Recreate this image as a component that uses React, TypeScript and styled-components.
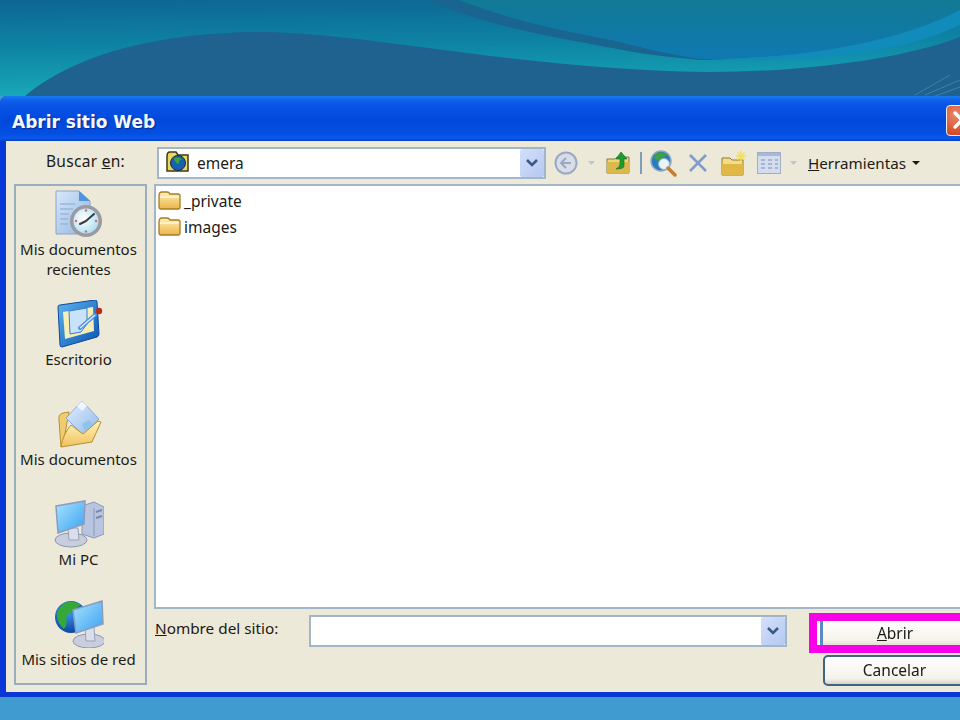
import React from "react";
import styled, { createGlobalStyle } from "styled-components";

const Global = createGlobalStyle`
  html, body { margin: 0; padding: 0; background: #3f9bd0; }
  * { box-sizing: border-box; }
`;

const Page = styled.div`
  width: 960px;
  height: 720px;
  overflow: hidden;
  background: #3f9bd0;
  display: flex;
  flex-direction: column;
`;
const WaveArt = styled.svg`
  display: block;
  width: 960px;
  height: 96px;
  flex: none;
`;
const Dialog = styled.div`
  width: 990px;
  height: 601px;
  flex: none;
  display: flex;
  flex-direction: column;
  background: #0a3fd0;
  border-top-left-radius: 7px;
  border-left: 6px solid #0837d8;
  border-bottom: 5px solid #0a36d6;
  font-family: "Noto Sans", "Open Sans", sans-serif;
  font-size: 15.5px;
  color: #1c1a16;
  filter: blur(0.35px);
`;
const TitleBar = styled.div`
  height: 45px;
  flex: none;
  margin-left: -6px;
  padding: 7px 0 0 12px;
  display: flex;
  align-items: center;
  border-top-left-radius: 7px;
  background: linear-gradient(180deg, #1a7cf2 0%, #0f63ea 8%, #0a55e6 20%, #0048dc 55%, #0450e2 85%, #0a58ea 94%, #0440c8 100%);
  color: #f4f8ff;
  font-family: "DejaVu Sans", sans-serif;
  font-weight: 700;
  font-size: 17px;
  text-shadow: 1px 1px 1px #0a2a90;
  position: relative;
`;
const CloseButton = styled.div`
  position: absolute;
  left: 946px;
  top: 9px;
  width: 32px;
  height: 31px;
  border: 1.5px solid #f0f0f0;
  border-radius: 4px;
  background: radial-gradient(circle at 30% 30%, #e88a6a, #d8502c 60%, #b83a1c);
  svg { display: block; }
`;
const Body = styled.div`
  flex: 1;
  background: #ece9d8;
  display: flex;
  flex-direction: column;
  min-height: 0;
`;
const TopRow = styled.div`
  height: 43px;
  flex: none;
  padding: 6px 0 0 8px;
  display: flex;
  align-items: flex-start;
`;
const LookLabel = styled.div`
  width: 133px;
  height: 32px;
  line-height: 29px;
  text-align: center;
  padding-left: 10px;
  letter-spacing: 0.3px;
`;
const Combo = styled.div<{ $w: number }>`
  margin-left: 10px;
  height: 32px;
  background: #fff;
  border: 2px solid #a3b6c8;
  display: flex;
  align-items: center;
  width: ${(p) => p.$w}px;
  flex: none;
`;
const ComboIcon = styled.svg`
  width: 25px;
  height: 24px;
  margin: -3px 6px 0 7px;
  flex: none;
`;
const ComboText = styled.div`
  flex: 1;
  margin-top: -1px;
`;
const ArrowButton = styled.div`
  width: 24px;
  height: 28px;
  background: linear-gradient(135deg, #d4e0fa, #b4c8f2);
  border-radius: 2px;
  display: flex;
  align-items: center;
  justify-content: center;
`;
const Toolbar = styled.div`
  height: 32px;
  display: flex;
  align-items: center;
  margin-left: 8px;
`;
const ToolIcon = styled.svg<{ $ml?: number }>`
  flex: none;
  margin-left: ${(p) => p.$ml ?? 0}px;
`;
const ToolSep = styled.div`
  width: 2px;
  height: 22px;
  background: #7f9db9;
  margin-left: 9px;
`;
const ToolMenu = styled.div`
  margin-left: 11px;
  display: flex;
  align-items: center;
  gap: 6px;
  white-space: nowrap;
  font-size: 15.2px;
  margin-top: -1px;
`;
const Caret = styled.span`
  width: 0;
  height: 0;
  border-left: 4.5px solid transparent;
  border-right: 4.5px solid transparent;
  border-top: 4px solid #1c1a16;
`;
const MainRow = styled.div`
  flex: 1;
  display: flex;
  padding: 0 0 7px 8px;
  min-height: 0;
`;
const Places = styled.div`
  width: 133px;
  flex: none;
  border: 2px solid #98aebf;
  padding: 4px 4px 0 0;
  display: flex;
  flex-direction: column;
  align-items: center;
  font-size: 15px;
`;
const Place = styled.div<{ $h: number }>`
  height: ${(p) => p.$h}px;
  flex: none;
  width: 100%;
  display: flex;
  flex-direction: column;
  align-items: center;
  text-align: center;
  line-height: 20px;
  white-space: nowrap;
  svg { flex: none; margin-bottom: 1px; }
`;
const Right = styled.div`
  flex: 1;
  margin-left: 7px;
  display: flex;
  flex-direction: column;
  min-width: 0;
`;
const FileList = styled.div`
  height: 425px;
  flex: none;
  background: #fff;
  border: 2px solid #a3b6c8;
  border-right: none;
  padding: 2px 0 0 1px;
  display: flex;
  flex-direction: column;
`;
const FileRow = styled.div`
  height: 26px;
  display: flex;
  align-items: center;
  gap: 1px;
`;
const Footer = styled.div`
  flex: 1;
  display: grid;
  grid-template-columns: 155px 478px 1fr;
  grid-template-rows: 44px 1fr;
  padding-top: 4px;
`;
const NameLabel = styled.div`
  padding: 3px 0 0 1px;
  line-height: 24px;
  font-size: 15.3px;
`;
const NameCombo = styled(Combo)`
  margin: 2px 0 0;
  justify-content: flex-end;
`;
const DefaultFrame = styled.div`
  margin-left: 22px;
  height: 40px;
  width: 190px;
  border: 8px solid #f800e8;
  background: #ece9d8;
`;
const DefaultButton = styled.div`
  height: 24px;
  text-align: center;
  line-height: 24px;
  padding-right: 21px;
  background: linear-gradient(180deg, #fff, #f4f2ea 80%, #e4e0d0);
  border-left: 3px solid #fff;
  box-shadow: inset 3px 0 0 #5f88c0;
`;
const CancelButton = styled.div`
  grid-column: 3;
  margin: -2px 0 0 36px;
  height: 31px;
  width: 190px;
  border: 2px solid #3f6488;
  border-radius: 5px;
  text-align: center;
  line-height: 27px;
  padding-right: 47px;
  background: linear-gradient(180deg, #fff, #f4f2ea 80%, #d8d4c4);
`;

const SmallFolder = () => (
  <svg width="26" height="22" viewBox="0 0 26 22">
    <defs>
      <linearGradient id="sf" x1="0" y1="0" x2="0" y2="1">
        <stop offset="0" stopColor="#fff0b8" />
        <stop offset="1" stopColor="#ecb448" />
      </linearGradient>
    </defs>
    <path d="M2 6 Q2 2 5 2 H10 Q12 2 13 4 H21 Q23 4 23 6 V17 Q23 19 21 19 H4 Q2 19 2 17 Z" fill="url(#sf)" stroke="#a87c20" strokeWidth="1.3" />
    <path d="M3 7 H22" stroke="#fff6d0" strokeWidth="1.5" />
  </svg>
);

const RecentIcon = () => (
  <svg width="48" height="48" viewBox="0 0 48 48">
    <defs>
      <linearGradient id="rd" x1="0" y1="0" x2="1" y2="1">
        <stop offset="0" stopColor="#d8e8fa" />
        <stop offset="1" stopColor="#8fb4e2" />
      </linearGradient>
      <radialGradient id="rc" cx="0.4" cy="0.4" r="0.7">
        <stop offset="0" stopColor="#ffffff" />
        <stop offset="1" stopColor="#a8dcf0" />
      </radialGradient>
    </defs>
    <path d="M1 1 H24 L35 11 V44 H1 Z" fill="url(#rd)" stroke="#8aa6c8" />
    <path d="M24 1 V11 H35 Z" fill="#4f94dc" />
    <path d="M5 14 H20 M5 19 H18 M5 24 H14 M5 29 H13 M5 34 H13" stroke="#9ab6d8" strokeWidth="1.5" />
    <circle cx="31" cy="31" r="16" fill="#9a9aa2" />
    <circle cx="31" cy="31" r="12.5" fill="url(#rc)" />
    <path d="M31 31 L39 24 M31 31 L25 34" stroke="#3a3a40" strokeWidth="2" strokeLinecap="round" />
    <circle cx="31" cy="20.5" r="1.2" fill="#d87060" /><circle cx="41" cy="31" r="1.2" fill="#d87060" />
    <circle cx="31" cy="41.5" r="1.2" fill="#d87060" /><circle cx="21" cy="31" r="1.2" fill="#d87060" />
  </svg>
);

const DesktopIcon = () => (
  <svg width="48" height="48" viewBox="0 0 48 48">
    <defs>
      <linearGradient id="db" x1="0" y1="0" x2="1" y2="1">
        <stop offset="0" stopColor="#5cb4ee" />
        <stop offset="1" stopColor="#0a52b4" />
      </linearGradient>
    </defs>
    <path d="M3 7 Q3 5 5 5 L40 0 Q42 0 42 2 L44 34 Q44 36 42 37 L7 47 Q5 47 5 45 Z" fill="url(#db)" stroke="#0c4a9c" />
    <path d="M8 12 L38 7 L39 31 L10 39 Z" fill="#f6eeb8" />
    <path d="M14 11 L32 8 V24 L26 32 L15 34 Z" fill="#c8e2fa" stroke="#3a7cc8" />
    <path d="M25 28 L40 15" stroke="#4a90e0" strokeWidth="4" strokeLinecap="round" />
    <path d="M25 28 L40 15" stroke="#d8ecff" strokeWidth="1.5" />
    <circle cx="44" cy="11" r="3.2" fill="#b82c18" />
  </svg>
);

const DocsIcon = () => (
  <svg width="48" height="48" viewBox="0 0 48 48">
    <defs>
      <linearGradient id="df" x1="0" y1="0" x2="0" y2="1">
        <stop offset="0" stopColor="#fff4bc" />
        <stop offset="1" stopColor="#f0c25c" />
      </linearGradient>
      <linearGradient id="dp" x1="0" y1="0" x2="1" y2="1">
        <stop offset="0" stopColor="#e4f0ff" />
        <stop offset="1" stopColor="#90b8ec" />
      </linearGradient>
    </defs>
    <path d="M4 20 Q3 14 8 13 L14 12 L8 44 L6 47 Z" fill="#f0cc70" stroke="#b89030" />
    <path d="M11 18 L27 1 L44 19 L28 35 Z" fill="url(#dp)" stroke="#8cacd4" />
    <path d="M22 6 L27 1 L32 6 L27 11 Z" fill="#f0f6ff" />
    <path d="M16 25 L28 34 L43 21 L46 22 L37 42 L6 47 Q8 34 16 25 Z" fill="url(#df)" stroke="#b89030" />
    <path d="M27 24 L34 20 L38 24 L30 31 Z" fill="#8ec4ec" />
  </svg>
);

const PcIcon = () => (
  <svg width="50" height="48" viewBox="0 0 50 48">
    <defs>
      <linearGradient id="ps" x1="0" y1="0" x2="1" y2="1">
        <stop offset="0" stopColor="#a8e4ff" />
        <stop offset="1" stopColor="#3aa0f0" />
      </linearGradient>
    </defs>
    <path d="M28 6 L40 2 L50 7 V34 L40 38 L28 34 Z" fill="#b8c4e0" stroke="#8a98b8" />
    <path d="M40 8 V36" stroke="#8a98b8" />
    <path d="M42 12 L48 10 M42 18 L48 16" stroke="#7a88a8" strokeWidth="2" />
    <ellipse cx="17" cy="40" rx="16" ry="7" fill="#c8cede" stroke="#8c96ae" />
    <path d="M14 28 H24 L25 40 H15 Z" fill="#d8deea" stroke="#98a2b8" />
    <path d="M2 6 L31 1 L30 24 L4 33 Z" fill="url(#ps)" stroke="#8c9cc0" strokeWidth="1.5" />
  </svg>
);

const NetIcon = () => (
  <svg width="50" height="48" viewBox="0 0 50 48">
    <defs>
      <linearGradient id="ns" x1="0" y1="0" x2="1" y2="1">
        <stop offset="0" stopColor="#a8e4ff" />
        <stop offset="1" stopColor="#3aa0f0" />
      </linearGradient>
      <radialGradient id="ng" cx="0.4" cy="0.35" r="0.7">
        <stop offset="0" stopColor="#3a9ae8" />
        <stop offset="1" stopColor="#0a3ea0" />
      </radialGradient>
    </defs>
    <circle cx="17" cy="17" r="16" fill="url(#ng)" />
    <path d="M9 4 Q18 -1 27 5 Q20 8 22 13 Q14 10 12 18 Q14 24 10 29 Q2 22 3 12 Q6 7 9 4 Z" fill="#36a838" />
    <ellipse cx="35" cy="41" rx="16" ry="7" fill="#c8cede" stroke="#8c96ae" />
    <path d="M31 27 H40 L41 41 H32 Z" fill="#d8deea" stroke="#98a2b8" />
    <path d="M19 10 L48 1 L49 24 L22 33 Z" fill="url(#ns)" stroke="#8c9cc0" strokeWidth="1.5" />
  </svg>
);

const Chevron = () => (
  <svg width="14" height="10" viewBox="0 0 14 10">
    <path d="M2 2 L7 7 L12 2" fill="none" stroke="#3a5a84" strokeWidth="2.6" />
  </svg>
);

export default function App() {
  return (
    <Page>
      <Global />
      <WaveArt viewBox="0 0 960 96" preserveAspectRatio="none">
        <defs>
          <linearGradient id="w1" x1="0" y1="0" x2="0.1" y2="1">
            <stop offset="0" stopColor="#0d6694" />
            <stop offset="0.5" stopColor="#0e84a4" />
            <stop offset="1" stopColor="#18a8b8" />
          </linearGradient>
          <linearGradient id="w2" x1="0" y1="0" x2="0" y2="1">
            <stop offset="0" stopColor="#127a94" />
            <stop offset="1" stopColor="#0f78b2" />
          </linearGradient>
        </defs>
        <rect width="960" height="96" fill="url(#w1)" />
        <path d="M429 0 C 480 25 560 38 612 48 C 640 54 670 57 700 60 L 760 60 L 700 57 C 670 54 640 47 612 40 C 560 30 510 20 459 0 Z" fill="#1a6490" />
        <path d="M459 0 H960 V12 C900 42 800 60 700 59 C670 55 640 47 612 40 C560 30 510 20 459 0 Z" fill="url(#w2)" />
        <path d="M700 59 C800 60 900 42 960 10 V25 C900 55 800 62 730 60 Z" fill="#118cba" />
        <path d="M25 96 C80 50 170 32 263 32 C380 34 520 70 710 72 C800 72 900 60 960 37 V96 Z" fill="#1f628f" />
        <path d="M915 95 L950 75 M925 95 L960 80 M935 96 L960 87" stroke="#3f80a8" strokeWidth="1" />
      </WaveArt>
      <Dialog>
        <TitleBar>
          Abrir sitio Web
          <CloseButton>
            <svg width="29" height="28" viewBox="0 0 29 28">
              <path d="M8 7 L22 21 M22 7 L8 21" stroke="#fff" strokeWidth="3.4" strokeLinecap="round" />
            </svg>
          </CloseButton>
        </TitleBar>
        <Body>
          <TopRow>
            <LookLabel>Buscar <u>e</u>n:</LookLabel>
            <Combo $w={389}>
              <ComboIcon viewBox="0 0 25 24">
                <path d="M1 6 Q1 2 4 2 H10 L12 5 H22 V21 H1 Z" fill="#e8d860" stroke="#3a3a1c" strokeWidth="1.5" />
                <circle cx="12" cy="13" r="7.5" fill="#1660b0" stroke="#1a2a4a" />
                <path d="M8 8 Q13 6 16 9 Q12 11 13 14 Q9 14 8 8 Z" fill="#3aa040" />
              </ComboIcon>
              <ComboText>emera</ComboText>
              <ArrowButton><Chevron /></ArrowButton>
            </Combo>
            <Toolbar>
              <ToolIcon width="24" height="24" viewBox="0 0 24 24" $ml={0}>
                <circle cx="12" cy="12" r="10.5" fill="#d8dee8" stroke="#9aa8c4" strokeWidth="2" />
                <path d="M12 7 L7 12 L12 17 M7 12 H17" fill="none" stroke="#9aa8c4" strokeWidth="2" />
              </ToolIcon>
              <ToolIcon width="7" height="5" viewBox="0 0 7 5" $ml={10}><path d="M0 0 H7 L3.5 4 Z" fill="#c0c4cc" /></ToolIcon>
              <ToolIcon width="25" height="24" viewBox="0 0 25 24" $ml={11}>
                <path d="M1 8 H9 L11 6 H23 V22 H1 Z" fill="#f0d478" stroke="#8a7a3c" />
                <path d="M1 11 H24 V22 H1 Z" fill="#dcb84c" />
                <path d="M15 1 L21 8 H18 V15 Q18 18 10 18 Q14 16 14 13 V8 H10 Z" fill="#1e9a34" stroke="#0c6c1c" strokeWidth="0.6" />
              </ToolIcon>
              <ToolSep />
              <ToolIcon width="27" height="27" viewBox="0 0 27 27" $ml={8}>
                <circle cx="11" cy="11" r="10" fill="#2a7cc0" stroke="#90a8c0" strokeWidth="1.5" />
                <path d="M5 4 Q12 0 18 5 Q12 7 11 11 Q6 11 4 8 Z" fill="#3aa04a" />
                <circle cx="14" cy="14" r="5.5" fill="#e8f4fc" stroke="#9ab0c4" />
                <path d="M18 18 L25 25" stroke="#c08038" strokeWidth="3.5" strokeLinecap="round" />
              </ToolIcon>
              <ToolIcon width="20" height="20" viewBox="0 0 20 20" $ml={11}>
                <path d="M2 2 L18 18 M18 2 L2 18" stroke="#7f9ccc" strokeWidth="2.6" />
              </ToolIcon>
              <ToolIcon width="26" height="26" viewBox="0 0 26 26" $ml={13}>
                <path d="M1 8 H9 L11 10 H22 V25 H1 Z" fill="#f4dc88" stroke="#8a7a3c" />
                <path d="M1 14 H22 V25 H1 Z" fill="#e0b848" />
                <path d="M20 1 V11 M15 6 H25 M16.5 2.5 L23.5 9.5 M23.5 2.5 L16.5 9.5" stroke="#f4e050" strokeWidth="1.4" />
              </ToolIcon>
              <ToolIcon width="24" height="22" viewBox="0 0 24 22" $ml={10}>
                <rect x="0.5" y="0.5" width="23" height="21" fill="#d4dcf0" stroke="#a0aec8" />
                <rect x="1" y="1" width="22" height="3" fill="#a8b8d8" />
                <path d="M4 8 H8 M11 8 H15 M18 8 H21 M4 12 H8 M11 12 H15 M18 12 H21 M4 16 H8 M11 16 H15 M18 16 H21" stroke="#98a8c4" strokeWidth="1.6" />
              </ToolIcon>
              <ToolIcon width="7" height="5" viewBox="0 0 7 5" $ml={9}><path d="M0 0 H7 L3.5 4 Z" fill="#c0c4cc" /></ToolIcon>
              <ToolMenu><span><u>H</u>erramientas</span><Caret /></ToolMenu>
            </Toolbar>
          </TopRow>
          <MainRow>
            <Places>
              <Place $h={110}><RecentIcon /><span>Mis documentos</span><span>recientes</span></Place>
              <Place $h={100}><DesktopIcon /><span>Escritorio</span></Place>
              <Place $h={100}><DocsIcon /><span>Mis documentos</span></Place>
              <Place $h={100}><PcIcon /><span>Mi PC</span></Place>
              <Place $h={80}><NetIcon /><span>Mis sitios de red</span></Place>
            </Places>
            <Right>
              <FileList>
                <FileRow><SmallFolder /><span>_private</span></FileRow>
                <FileRow><SmallFolder /><span>images</span></FileRow>
              </FileList>
              <Footer>
                <NameLabel><u>N</u>ombre del sitio:</NameLabel>
                <NameCombo $w={478}><ArrowButton><Chevron /></ArrowButton></NameCombo>
                <DefaultFrame><DefaultButton><u>A</u>brir</DefaultButton></DefaultFrame>
                <CancelButton>Cancelar</CancelButton>
              </Footer>
            </Right>
          </MainRow>
        </Body>
      </Dialog>
    </Page>
  );
}
